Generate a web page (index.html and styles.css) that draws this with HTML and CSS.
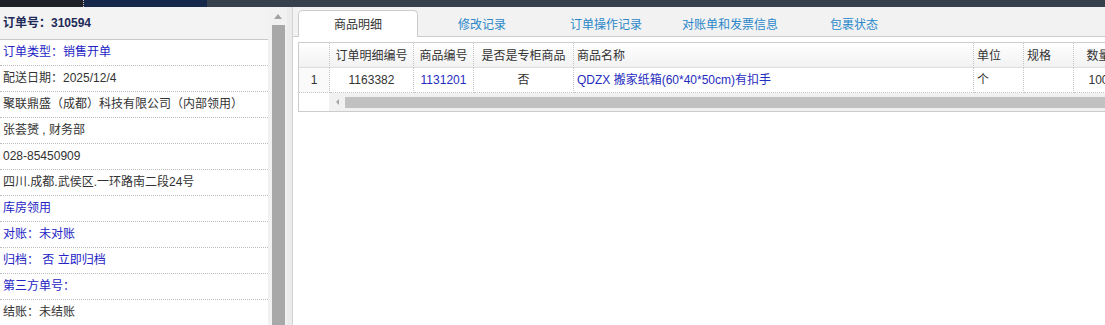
FILE: index.html
```html
<!DOCTYPE html>
<html lang="zh-CN">
<head>
<meta charset="utf-8">
<title>订单详情</title>
<link rel="stylesheet" href="styles.css">
</head>
<body>
<div class="topbar">
  <span class="seg seg-a"></span>
  <span class="seg seg-b"></span>
  <span class="seg seg-c"></span>
</div>
<div class="main">
  <aside class="left">
    <div class="info">
      <div class="info-head">订单号：310594</div>
      <div class="info-row blue">订单类型：销售开单</div>
      <div class="info-row">配送日期：2025/12/4</div>
      <div class="info-row">聚联鼎盛（成都）科技有限公司（内部领用）</div>
      <div class="info-row">张荟赟 , 财务部</div>
      <div class="info-row">028-85450909</div>
      <div class="info-row">四川.成都.武侯区.一环路南二段24号</div>
      <div class="info-row blue">库房领用</div>
      <div class="info-row blue">对账：未对账</div>
      <div class="info-row blue">归档：&nbsp;否 立即归档</div>
      <div class="info-row blue">第三方单号：</div>
      <div class="info-row">结账：未结账</div>
    </div>
    <div class="vscroll">
      <div class="vscroll-up"></div>
      <div class="vscroll-thumb"></div>
    </div>
  </aside>
  <div class="splitter"></div>
  <section class="right">
    <nav class="tabs">
      <span class="tab active">商品明细</span>
      <span class="tab">修改记录</span>
      <span class="tab">订单操作记录</span>
      <span class="tab">对账单和发票信息</span>
      <span class="tab">包裹状态</span>
    </nav>
    <div class="panel">
      <div class="grid">
        <div class="grid-row head">
          <div class="cell num"></div>
          <div class="cell c">订单明细编号</div>
          <div class="cell c">商品编号</div>
          <div class="cell c">是否是专柜商品</div>
          <div class="cell l">商品名称</div>
          <div class="cell l">单位</div>
          <div class="cell l">规格</div>
          <div class="cell c">数量</div>
        </div>
        <div class="grid-row body">
          <div class="cell num">1</div>
          <div class="cell c">1163382</div>
          <div class="cell c link">1131201</div>
          <div class="cell c">否</div>
          <div class="cell l link">QDZX 搬家纸箱(60*40*50cm)有扣手</div>
          <div class="cell l">个</div>
          <div class="cell l"></div>
          <div class="cell c">100</div>
        </div>
        <div class="hscroll">
          <div class="hscroll-gap"></div>
          <div class="hscroll-track">
            <div class="hscroll-left"></div>
            <div class="hscroll-thumb"></div>
          </div>
        </div>
      </div>
    </div>
  </section>
</div>
</body>
</html>
```

FILE: styles.css
```css
* { box-sizing: border-box; }
html, body {
  margin: 0;
  padding: 0;
  width: 1105px;
  height: 325px;
  overflow: hidden;
  background: #ffffff;
  font-family: "Liberation Sans", "Noto Sans CJK SC", Arial, sans-serif;
  font-size: 12px;
  color: #333333;
}

.topbar {
  display: flex;
  height: 7px;
}
.seg { display: block; height: 7px; }
.seg-a { width: 84px; background: #1f2229; border-right: 1px dotted #c9ced6; }
.seg-b { width: 123px; background: #16294c; }
.seg-c { flex: 1; background: #36414d; }

.main {
  display: flex;
  height: 318px;
  overflow: hidden;
}

/* left info panel */
.left {
  display: flex;
  width: 287px;
  flex-shrink: 0;
  background: #ffffff;
}
.info {
  width: 268px;
  flex-shrink: 0;
}
.info-head {
  height: 33px;
  padding: 0 0 0 3px;
  line-height: 32px;
  background: #f3f3f3;
  border-bottom: 1px solid #c8c8c8;
  font-weight: bold;
  color: #1d2a57;
}
.info-row {
  height: 26px;
  line-height: 25px;
  padding-left: 3px;
  border-bottom: 1px dotted #bdbdbd;
  white-space: nowrap;
  overflow: hidden;
}
.info-row.blue { color: #2424c4; }

.vscroll {
  width: 19px;
  flex-shrink: 0;
  background: #f1f1f1;
  display: flex;
  flex-direction: column;
  align-items: center;
  padding-top: 7px;
}
.vscroll-up {
  width: 0;
  height: 0;
  border-left: 4px solid transparent;
  border-right: 4px solid transparent;
  border-bottom: 5px solid #a3a3a3;
  margin-bottom: 6px;
}
.vscroll-thumb {
  width: 13px;
  flex: 1;
  background: #a8a8a8;
  margin-left: 1px;
}

.splitter {
  width: 5px;
  flex-shrink: 0;
  background: #ebebeb;
}

/* right panel */
.right {
  flex: 1;
  min-width: 0;
  overflow: hidden;
  border-left: 1px solid #d2d2d2;
}
.tabs {
  display: flex;
  align-items: flex-end;
  gap: 4px;
  height: 30px;
  padding-left: 5px;
  background: #f2f2f2;
  border-bottom: 1px solid #cccccc;
}
.tab {
  width: 120px;
  height: 27px;
  margin-bottom: -1px;
  line-height: 25px;
  text-align: center;
  color: #2a87c9;
  border: 1px solid transparent;
  border-bottom: none;
  border-radius: 5px 5px 0 0;
  font-family: "Noto Sans CJK SC", sans-serif;
}
.tab.active {
  background: #ffffff;
  color: #333333;
  border-color: #cccccc;
}

.panel {
  padding: 5px 0 0 5px;
}
.grid {
  width: 880px;
  border: 1px solid #cccccc;
  background: #ffffff;
}
.grid-row {
  display: grid;
  grid-template-columns: 31px 84px 60px 100px 400px 50px 50px 50px 55px;
  height: 25px;
}
.cell {
  height: 25px;
  line-height: 24px;
  border-right: 1px dotted #c4c4c4;
  white-space: nowrap;
  overflow: hidden;
}
.cell.c { text-align: center; }
.cell.l { padding-left: 3px; }
.cell.num { text-align: center; }
.head {
  background: linear-gradient(#ffffff, #f1f1f1);
}
.head .cell {
  border-bottom: 1px solid #dedede;
  font-family: "Noto Sans CJK SC", sans-serif;
}
.body .cell {
  border-bottom: 1px dotted #c4c4c4;
}
.body .cell.num { background: #fafafa; }
.link { color: #1f2cc0; }

.hscroll {
  display: flex;
  height: 18px;
}
.hscroll-gap { width: 30px; background: #ffffff; }
.hscroll-track {
  flex: 1;
  display: flex;
  align-items: center;
  background: #f1f1f1;
  padding: 0;
}
.hscroll-left {
  width: 0;
  height: 0;
  margin: 0 6px 0 7px;
  border-top: 3px solid transparent;
  border-bottom: 3px solid transparent;
  border-right: 3px solid #a3a3a3;
}
.hscroll-thumb {
  flex: 1;
  height: 11px;
  background: #c1c1c1;
}
```
